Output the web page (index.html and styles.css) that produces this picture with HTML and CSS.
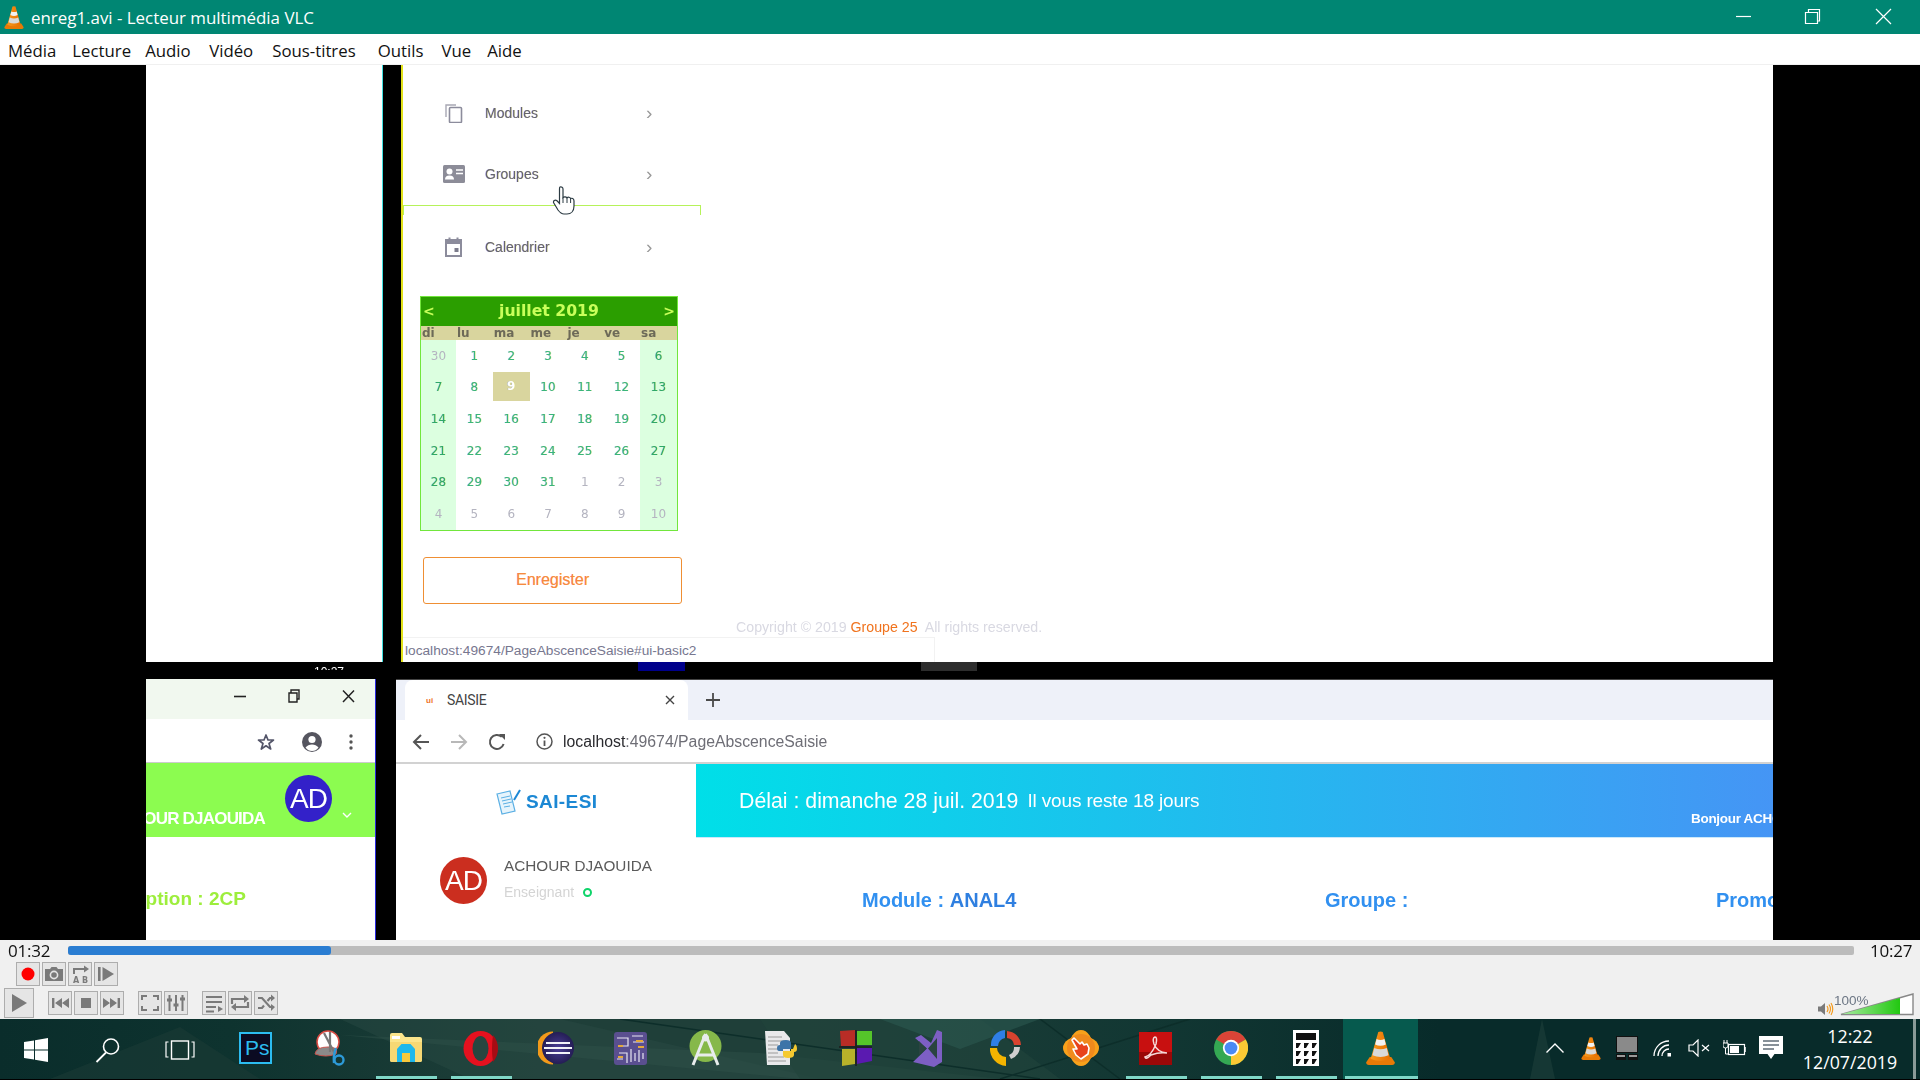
FILE: index.html
```html
<!DOCTYPE html>
<html lang="fr">
<head>
<meta charset="utf-8">
<title>enreg1.avi - Lecteur multimédia VLC</title>
<link rel="stylesheet" href="styles.css">
</head>
<body>
<svg class="defs" width="0" height="0" aria-hidden="true">
  <defs>
    <linearGradient id="coneG" x1="0" x2="1" y1="0" y2="0"><stop offset="0" stop-color="#f79a1e"/><stop offset="1" stop-color="#e86f00"/></linearGradient>
    <linearGradient id="volG" x1="0" x2="1" y1="0" y2="0"><stop offset="0" stop-color="#a8eaa0"/><stop offset="1" stop-color="#22c811"/></linearGradient>
    <radialGradient id="eclG" cx=".5" cy=".5" r=".6"><stop offset="0" stop-color="#4a3d96"/><stop offset="1" stop-color="#1d1748"/></radialGradient>
    <symbol id="vlc" viewBox="0 0 32 38">
      <path d="M4 29 L0 35 Q0 38 3 38 H29 Q32 38 32 35 L28 29 Z" fill="#e87a06"/>
      <path d="M13.5 1 Q16 0 18.5 1 L27 31 Q16 36 5 31 Z" fill="url(#coneG)"/>
      <path d="M11.6 9 Q16 11 20.4 9 L22 15 Q16 18 10 15 Z" fill="#f2f2f2"/>
      <path d="M9 19 Q16 22 23 19 L25 27 Q16 31 7 27 Z" fill="#d9d9d9"/>
    </symbol>
  </defs>
</svg>

<div class="app">
  <header class="titlebar">
    <svg class="title-cone" width="20" height="23"><use href="#vlc"/></svg>
    <span class="title-text">enreg1.avi - Lecteur multimédia VLC</span>
    <div class="winctl">
      <svg width="70" height="34" viewBox="0 0 70 34"><path d="M26 16.500 H41" stroke="#fff" stroke-width="1.200"/></svg>
      <svg width="70" height="34" viewBox="0 0 70 34"><path d="M25.500 12.500 H37.500 V23.500 H25.500 Z M28.500 12 V9.500 H39.500 V21 H38" fill="none" stroke="#fff" stroke-width="1.200"/></svg>
      <svg width="70" height="34" viewBox="0 0 70 34"><path d="M26 9 L41 24 M41 9 L26 24" stroke="#fff" stroke-width="1.200"/></svg>
    </div>
  </header>

  <nav class="menubar">
    <span class="menu-item">Média</span>
    <span class="menu-item m-lecture">Lecture</span>
    <span class="menu-item m-audio">Audio</span>
    <span class="menu-item m-video">Vidéo</span>
    <span class="menu-item m-sous">Sous-titres</span>
    <span class="menu-item m-outils">Outils</span>
    <span class="menu-item">Vue</span>
    <span class="menu-item">Aide</span>
  </nav>

  <main class="video">
    <div class="frame">
      <div class="row-top">
        <div class="blank"></div>
        <div class="divider-top"></div>
        <div class="page">
          <aside class="sidebar">
            <div class="side-item side-first">
              <svg class="ico-mod" width="20" height="20" viewBox="0 0 20 20"><path d="M2 14 V2 H12" fill="none" stroke="#a8a8b4" stroke-width="1.400"/><rect x="5.500" y="4.500" width="12" height="15" rx="1" fill="none" stroke="#8c8c9c" stroke-width="1.600"/></svg>
              <span class="side-label">Modules</span>
              <span class="side-chev">›</span>
            </div>
            <div class="side-item">
              <svg width="22" height="18" viewBox="0 0 22 18"><rect x="0" y="0" width="22" height="18" rx="1.500" fill="#8c8c98"/><circle cx="6.500" cy="6.500" r="3" fill="#fff"/><path d="M2 14.500 Q2 10.500 6.500 10.500 Q11 10.500 11 14.500 Z" fill="#fff"/><path d="M13 5 H20 M13 8.500 H20" stroke="#fff" stroke-width="1.400"/></svg>
              <span class="side-label">Groupes</span>
              <span class="side-chev">›</span>
            </div>
            <div class="side-rule"></div>
            <div class="side-item side-cal">
              <svg class="ico-cal" width="17" height="20" viewBox="0 0 17 20"><path d="M1 3 H16 V19 H1 Z" fill="#fff" stroke="#8c8c9c" stroke-width="2"/><rect x="1" y="3" width="15" height="4" fill="#8c8c9c"/><path d="M4.500 0.500 V4 M12.500 0.500 V4" stroke="#8c8c9c" stroke-width="2"/><rect x="9.500" y="11" width="4" height="4" fill="#7c7c8c"/></svg>
              <span class="side-label">Calendrier</span>
              <span class="side-chev">›</span>
            </div>
            <section class="calendar">
              <div class="cal-head"><span>&lt;</span><strong>juillet 2019</strong><span>&gt;</span></div>
              <div class="cal-week"><span>di</span><span>lu</span><span>ma</span><span>me</span><span>je</span><span>ve</span><span>sa</span></div>
              <div class="cal-grid">
                <span class="we off">30</span><span>1</span><span>2</span><span>3</span><span>4</span><span>5</span><span class="we">6</span>
                <span class="we">7</span><span>8</span><span class="today">9</span><span>10</span><span>11</span><span>12</span><span class="we">13</span>
                <span class="we">14</span><span>15</span><span>16</span><span>17</span><span>18</span><span>19</span><span class="we">20</span>
                <span class="we">21</span><span>22</span><span>23</span><span>24</span><span>25</span><span>26</span><span class="we">27</span>
                <span class="we">28</span><span>29</span><span>30</span><span>31</span><span class="off">1</span><span class="off">2</span><span class="we off">3</span>
                <span class="we off">4</span><span class="off">5</span><span class="off">6</span><span class="off">7</span><span class="off">8</span><span class="off">9</span><span class="we off">10</span>
              </div>
            </section>
            <div class="save-btn">Enregister</div>
          </aside>
          <footer class="copyright">Copyright © 2019 <b>Groupe 25</b>&nbsp; All rights reserved.</footer>
          <div class="status-bubble">localhost:49674/PageAbscenceSaisie#ui-basic2</div>
          <svg class="hand" width="24" height="29" viewBox="0 0 24 29"><path d="M8 1 C9.500 0.300 11 1.500 11 3 V11.500 C12 10.500 14 10.500 15 11.800 C16 10.800 18 11 18.600 12.600 C19.800 11.800 22 12.400 22 15 V20 C22 25 19 28 15 28 H12 C9 28 7.500 26 6 24 L1.800 17 C0.800 15 3 13.200 5 14.800 L7.500 17.500 V3 C7.500 2 7.500 1.300 8 1 Z" fill="#fff" stroke="#2b3a42" stroke-width="1.200"/><path d="M11 11.500 V17 M15 12 V17 M18.600 12.800 V17" stroke="#2b3a42" stroke-width="1"/></svg>
        </div>
      </div>

      <div class="gap">
        <span class="gap-clock">10:27</span>
        <span class="gap-blue"></span>
        <span class="gap-gray"></span>
      </div>

      <div class="row-bottom">
        <div class="win-left">
          <div class="wl-title">
            <svg width="55" height="40" viewBox="0 0 55 40"><path d="M24 17.500 H36" stroke="#222" stroke-width="1.600"/></svg>
            <svg width="55" height="40" viewBox="0 0 55 40"><path d="M24 14 H32 V23 H24 Z M26 14 V11 H34 V20 H32" fill="none" stroke="#222" stroke-width="1.400"/></svg>
            <svg width="55" height="40" viewBox="0 0 55 40"><path d="M23 11.500 L34 23 M34 11.500 L23 23" stroke="#222" stroke-width="1.500"/></svg>
          </div>
          <div class="wl-tools">
            <svg width="18" height="18" viewBox="0 0 18 18"><path d="M9 2 L11 7 H16.500 L12 10.500 L13.700 16 L9 12.800 L4.300 16 L6 10.500 L1.500 7 H7 Z" fill="#fff" stroke="#54566a" stroke-width="1.700" stroke-linejoin="round"/></svg>
            <svg width="22" height="22" viewBox="0 0 22 22"><circle cx="11" cy="11" r="10" fill="#55555f"/><circle cx="11" cy="8.500" r="3.600" fill="#fff"/><path d="M4.500 16.500 Q7 13.400 11 13.400 Q15 13.400 17.500 16.500 Q15 20 11 20 Q7 20 4.500 16.500 Z" fill="#fff"/></svg>
            <svg width="4" height="18" viewBox="0 0 4 18"><circle cx="2" cy="3" r="1.700" fill="#555"/><circle cx="2" cy="9" r="1.700" fill="#555"/><circle cx="2" cy="15" r="1.700" fill="#555"/></svg>
          </div>
          <div class="wl-band">
            <span class="wl-name">ACHOUR DJAOUIDA</span>
            <span class="avatar avatar-blue">AD</span>
            <svg class="wl-chev" width="10" height="6" viewBox="0 0 10 6"><path d="M1 1 L5 5 L9 1" fill="none" stroke="#fff" stroke-width="1.400"/></svg>
          </div>
          <div class="wl-option">option : 2CP</div>
        </div>
        <div class="divider-bottom"></div>
        <div class="win-right">
          <div class="tabstrip">
            <div class="tab">
              <span class="favicon">ui</span>
              <span class="tab-title">SAISIE</span>
              <svg class="tab-close" width="10" height="10" viewBox="0 0 10 10"><path d="M1 1 L9 9 M9 1 L1 9" stroke="#444" stroke-width="1.400"/></svg>
            </div>
            <svg class="tab-new" width="14" height="14" viewBox="0 0 14 14"><path d="M7 0 V14 M0 7 H14" stroke="#4a4a4a" stroke-width="1.800"/></svg>
          </div>
          <div class="urlbar">
            <svg width="18" height="16" viewBox="0 0 18 16"><path d="M9 1 L2 8 L9 15 M2 8 H17" fill="none" stroke="#555" stroke-width="2"/></svg>
            <svg width="18" height="16" viewBox="0 0 18 16"><path d="M9 1 L16 8 L9 15 M16 8 H1" fill="none" stroke="#b8b8b8" stroke-width="2"/></svg>
            <svg width="18" height="18" viewBox="0 0 18 18"><path d="M15.600 11 A7 7 0 1 1 13.800 3.900" fill="none" stroke="#555" stroke-width="2"/><path d="M11 1 H17 V7 Z" fill="#555"/></svg>
            <svg class="url-info" width="17" height="17" viewBox="0 0 17 17"><circle cx="8.500" cy="8.500" r="7.500" fill="none" stroke="#555" stroke-width="1.500"/><path d="M8.500 7.500 V13" stroke="#555" stroke-width="1.800"/><circle cx="8.500" cy="4.800" r="1.100" fill="#555"/></svg>
            <span class="url-text"><b>localhost</b>:49674/PageAbscenceSaisie</span>
          </div>
          <div class="app-head">
            <div class="brand">
              <svg width="26" height="26" viewBox="0 0 26 26"><path d="M2 5 L15 2 L20 22 L7 25 Z" fill="#e6f4fc" stroke="#5cb0e4" stroke-width="1.200"/><path d="M6 9 L15 7 M7 12 L16 10 M8 15 L17 13 M9 18 L15 17" stroke="#5cb0e4" stroke-width="1"/><path d="M19 11 L25 1" stroke="#1d88d6" stroke-width="2"/></svg>
              <span class="brand-name">SAI-ESI</span>
            </div>
            <div class="banner">
              <span class="banner-main">Délai : dimanche 28 juil. 2019</span>
              <span class="banner-sub">Il vous reste 18 jours</span>
              <span class="banner-hello">Bonjour ACHOUR DJAOUIDA</span>
            </div>
          </div>
          <div class="content">
            <div class="user">
              <span class="avatar avatar-red">AD</span>
              <div class="user-info">
                <div class="user-name">ACHOUR DJAOUIDA</div>
                <div class="user-role">Enseignant <i class="online"></i></div>
              </div>
            </div>
            <div class="meta meta-module">Module : <b>ANAL4</b></div>
            <div class="meta meta-group">Groupe :</div>
            <div class="meta">Promotion : 2CP</div>
          </div>
        </div>
      </div>
    </div>
  </main>

  <section class="controls">
    <div class="seek">
      <span class="time">01:32</span>
      <div class="track"><div class="track-done"></div></div>
      <span class="time time-end">10:27</span>
    </div>
    <div class="btn-row btn-row-a">
      <span class="cbtn"><svg width="22" height="22" viewBox="0 0 22 22"><circle cx="11" cy="11" r="6.500" fill="#f00"/></svg></span>
      <span class="cbtn"><svg width="22" height="22" viewBox="0 0 22 22"><path d="M2 6 H7 L8.500 4 H13.500 L15 6 H20 V18 H2 Z" fill="#7a7a7a"/><circle cx="11" cy="12" r="3.600" fill="none" stroke="#e5e5e5" stroke-width="1.600"/></svg></span>
      <span class="cbtn"><svg width="22" height="22" viewBox="0 0 22 22"><path d="M5 11 V6 H17" fill="none" stroke="#7a7a7a" stroke-width="2"/><path d="M15 2.500 L20 6 L15 9.500 Z" fill="#7a7a7a"/><text x="4" y="20" class="ab">A</text><text x="13" y="20" class="ab">B</text></svg></span>
      <span class="cbtn"><svg width="22" height="22" viewBox="0 0 22 22"><rect x="3" y="4" width="2.600" height="14" fill="#7a7a7a"/><path d="M7.500 4 L19 11 L7.500 18 Z" fill="#7a7a7a"/></svg></span>
    </div>
    <div class="btn-row btn-row-b">
      <span class="cbtn cbtn-play"><svg width="28" height="28" viewBox="0 0 28 28"><path d="M7 5 L22 14 L7 23 Z" fill="#7a7a7a"/></svg></span>
      <span class="cgroup cgroup-first">
        <span class="cbtn"><svg width="22" height="22" viewBox="0 0 22 22"><rect x="3" y="6" width="2.400" height="10" fill="#7a7a7a"/><path d="M13 6 L6 11 L13 16 Z M20 6 L13 11 L20 16 Z" fill="#7a7a7a"/></svg></span>
        <span class="cbtn"><svg width="22" height="22" viewBox="0 0 22 22"><rect x="6" y="6" width="10" height="10" fill="#7a7a7a"/></svg></span>
        <span class="cbtn"><svg width="22" height="22" viewBox="0 0 22 22"><rect x="16.600" y="6" width="2.400" height="10" fill="#7a7a7a"/><path d="M2 6 L9 11 L2 16 Z M9 6 L16 11 L9 16 Z" fill="#7a7a7a"/></svg></span>
      </span>
      <span class="cgroup">
        <span class="cbtn"><svg width="22" height="22" viewBox="0 0 22 22"><path d="M3 8 V4 H8 M14 4 H19 V8 M19 14 V18 H14 M8 18 H3 V14" fill="none" stroke="#7a7a7a" stroke-width="2"/></svg></span>
        <span class="cbtn"><svg width="22" height="22" viewBox="0 0 22 22"><path d="M4.500 3 V19 M11 3 V19 M17.500 3 V19" stroke="#7a7a7a" stroke-width="2"/><path d="M2 8 H7 M8.500 13 H13.500 M15 7 H20" stroke="#7a7a7a" stroke-width="3"/></svg></span>
      </span>
      <span class="cgroup">
        <span class="cbtn"><svg width="22" height="22" viewBox="0 0 22 22"><path d="M3 5 H19 M3 10 H19 M3 15 H13 M3 19.500 H11" stroke="#7a7a7a" stroke-width="2"/><path d="M15 14 L20 17 L15 20 Z" fill="#7a7a7a"/></svg></span>
        <span class="cbtn"><svg width="22" height="22" viewBox="0 0 22 22"><path d="M3 12 V7 H16 M19 10 V15 H6" fill="none" stroke="#7a7a7a" stroke-width="2.200"/><path d="M15 3 L20 7 L15 11 Z M7 11 L2 15 L7 19 Z" fill="#7a7a7a"/></svg></span>
        <span class="cbtn"><svg width="22" height="22" viewBox="0 0 22 22"><path d="M3 6 H7 L15 15 H17 M3 16 H7 L9 13.500 M12.500 9 L15 6 H17" fill="none" stroke="#7a7a7a" stroke-width="2.200"/><path d="M16 2.500 L20 6 L16 9.500 Z M16 12 L20 15 L16 19 Z" fill="#7a7a7a"/></svg></span>
      </span>
      <div class="volume">
        <svg width="16" height="14" viewBox="0 0 16 14"><path d="M0 4.500 H3 L7 1 V13 L3 9.500 H0 Z" fill="#7a7a7a"/><path d="M9 4 Q11 7 9 10 M11 2.500 Q14 7 11 11.500 M13 1 Q16.500 7 13 13" fill="none" stroke="#f39a1e" stroke-width="1.200"/></svg>
        <svg class="vol-bar" width="74" height="23" viewBox="0 0 74 23"><path d="M1 21.500 L73 1 V21.500 Z" fill="#fff" stroke="#888" stroke-width="1.400"/><path d="M2 21 L60 5 V21 Z" fill="url(#volG)"/></svg>
        <span class="vol-label">100%</span>
      </div>
    </div>
  </section>

  <footer class="taskbar">
    <svg class="task-bg" width="1920" height="60" viewBox="0 0 1920 60" preserveAspectRatio="none">
      <path d="M340 0 L560 0 L820 60 L470 60 Z" fill="#2a4c44" opacity=".45"/>
      <path d="M340 16 L760 34 L1000 60 L800 60 Z" fill="#2d5048" opacity=".5"/>
      <path d="M760 0 L980 0 L1060 60 L800 60 Z" fill="#21443c" opacity=".6"/>
      <path d="M880 0 L1040 0 L960 30 Z" fill="#2c5850" opacity=".6"/>
      <path d="M1555 60 L1530 60 L1542 0 Z" fill="#21443e" opacity=".5"/>
      <path d="M50 60 L180 8 L260 60 Z" fill="#1a3a35" opacity=".6"/>
      <path d="M1040 0 L1120 60 M1000 60 L1190 0 M620 0 L1040 60" stroke="#0d2e2a" stroke-width="1.500"/>
    </svg>
    <div class="task-icons">
      <span class="start"><svg width="24" height="24" viewBox="0 0 24 24"><path d="M0 4 L10 2.500 V11.500 H0 Z M11 2.300 L24 0 V11.500 H11 Z M0 12.500 H10 V21.500 L0 20 Z M11 12.500 H24 V24 L11 21.700 Z" fill="#fff"/></svg></span>
      <span class="start"><svg width="26" height="26" viewBox="0 0 26 26"><circle cx="16" cy="9.500" r="7.500" fill="none" stroke="#fff" stroke-width="1.600"/><path d="M11 15.500 L1.500 25" stroke="#fff" stroke-width="1.800"/></svg></span>
      <span class="start"><svg width="30" height="20" viewBox="0 0 30 20"><rect x="6.500" y="1" width="17" height="18" fill="none" stroke="#fff" stroke-width="1.400"/><path d="M3.500 2 H1 V17 H3.500 M26.500 2 H29 V17 H26.500" fill="none" stroke="#fff" stroke-width="1.200"/></svg></span>
      <div class="cells">
        <span class="cell"><svg width="33" height="32" viewBox="0 0 33 32"><rect x="1" y="1" width="31" height="30" fill="#0b0b22" stroke="#2cbcf0" stroke-width="2"/><text x="6" y="23" class="ps">Ps</text></svg></span>
        <span class="cell"><svg width="34" height="36" viewBox="0 0 34 36"><ellipse cx="14" cy="12" rx="11" ry="11" fill="#fff" stroke="#d84a42" stroke-width="1.500"/><path d="M1 24 Q2 17 14 17 Q25 17 22 24 Q12 28 1 24 Z" fill="#8a8a8a" stroke="#c9544e" stroke-width="1"/><path d="M10 3 L21 24 M16 2 L16 22" stroke="#777" stroke-width="2.200"/><circle cx="25" cy="30" r="4.500" fill="none" stroke="#2d9ad8" stroke-width="2.400"/><path d="M22 18 Q19 26 20 33" fill="none" stroke="#2d9ad8" stroke-width="2.400"/></svg></span>
        <span class="cell running"><svg width="32" height="30" viewBox="0 0 32 30"><path d="M0 2 Q0 0 2 0 H12 L15 4 H30 Q32 4 32 6 V27 Q32 29 30 29 H2 Q0 29 0 27 Z" fill="#fbe58c"/><path d="M0 9 H32 V27 Q32 29 30 29 H2 Q0 29 0 27 Z" fill="#f6d874"/><path d="M2 3 H10 V6 H2 Z" fill="#fff"/><path d="M7 16 L11.500 11 H20.500 L25 16 V29 H20 V20 H12 V29 H7 Z" fill="#1eb8ec"/><rect x="12" y="20" width="8" height="9" fill="#f8c93c"/></svg></span>
        <span class="cell running"><svg width="35" height="35" viewBox="0 0 35 35"><ellipse cx="17.500" cy="17.500" rx="17" ry="17.500" fill="#e5111f"/><ellipse cx="17.500" cy="17.500" rx="8" ry="12.500" fill="#274640"/><path d="M30 4 Q35 10 35 17.500 Q35 25 30 31 Q28 18 30 4 Z" fill="#a60c14"/></svg></span>
        <span class="cell"><svg width="36" height="34" viewBox="0 0 36 34"><path d="M15 0.500 A16.500 16.500 0 0 0 15 33.500 Z" fill="#f29a1a"/><circle cx="20" cy="17" r="16" fill="url(#eclG)"/><path d="M8 12 H32 M6 17 H34 M8 22 H32" stroke="#f2f2f8" stroke-width="2"/></svg></span>
        <span class="cell"><svg width="33" height="33" viewBox="0 0 33 33"><rect x="0" y="0" width="33" height="33" rx="3" fill="#5a4f90"/><path d="M3 6 H14 V14 H4 M18 4 H29 M19 10 H30 M5 21 H13 V31 M3 27 H9 M17 17 V30 M21 21 V29 M25 18 V30 M29 21 V27" fill="none" stroke="#e8e6f2" stroke-width="1.200"/><path d="M22 9 H29 M4 14 H9 M24 15 H30 M4 25 H9" stroke="#e3a93c" stroke-width="1.800"/></svg></span>
        <span class="cell"><svg width="33" height="36" viewBox="0 0 33 36"><circle cx="16.500" cy="16" r="16" fill="#86b84a"/><path d="M16.500 4 L4 35 M16.500 4 L29 35 M8 25 H25" stroke="#e8ecec" stroke-width="3" fill="none"/><circle cx="16.500" cy="8" r="3.500" fill="#e8ecec"/></svg></span>
        <span class="cell"><svg width="34" height="35" viewBox="0 0 34 35"><path d="M1 0 H20 L26 7 V34 H3 Z" fill="#e8e8ea"/><path d="M4 6 H18 M4 10 H22 M4 14 H14 M4 18 H14 M4 22 H14 M4 26 H20 M4 30 H22" stroke="#9a9a9a" stroke-width="1"/><path d="M16 12 Q16 9 22 9 Q27 9 27 12 V18 H19 V20 H15 Q13 20 13 17 Q13 14 16 14 Z" fill="#3d74a8"/><path d="M31 13 Q33 14 33 18 Q33 21 30 21 V24 Q30 27 24 27 Q19 27 19 24 V20 H27 V18 H29 Z" fill="#f5c930"/></svg></span>
        <span class="cell"><svg width="33" height="36" viewBox="0 0 33 36"><path d="M1 1 L16 0 V16 H2 Z" fill="#b82d26"/><path d="M18 1 L33 1 V15 H18 Z" fill="#55c52a"/><path d="M3 19 H16 V34 L3 36 Z" fill="#b7b22a"/><path d="M18 18 H33 V31 L18 34 Z" fill="#5a1ab0"/><path d="M0 17 H33 M17 0 V36" stroke="#1d1d1d" stroke-width="1.500"/></svg></span>
        <span class="cell"><svg width="36" height="37" viewBox="0 0 36 37"><path d="M24 0 L29 2 V32 L21 37 L0 32 L14 18.500 L2 8 L8 5 L18 13 Z" fill="#7d5fc4"/><path d="M6 11 L13 18.500 L6 25 Z M24 8 V29 L15 18.500 Z" fill="#2a4440"/></svg></span>
        <span class="cell"><svg width="32" height="36" viewBox="0 0 32 36"><path d="M1 16 A15 15 0 0 1 15 0 V8 A9 9 0 0 0 8 16 Z" fill="#2f7fe6"/><path d="M17 8 V1 A15 15 0 0 1 31 15 H24 A8 8 0 0 0 17 8 Z" fill="#d8432f"/><path d="M0 18 H7 A9 9 0 0 0 16 27 V36 A17 17 0 0 1 0 18 Z" fill="#f4b400"/><path d="M24 17 H30 A14 14 0 0 1 21 29 L19 25 A8 8 0 0 0 24 17 Z" fill="#cfcfcf"/></svg></span>
        <span class="cell"><svg width="36" height="36" viewBox="0 0 36 36"><ellipse cx="18" cy="18" rx="12" ry="18" fill="#f8a11b"/><ellipse cx="18" cy="18" rx="18" ry="12" fill="#f8a11b"/><circle cx="18" cy="18" r="14" fill="#f08a1c"/><path d="M11 8 L17 14 L19 12 L21 15 L24 14 L26 18 L25 24 L18 29 L13 25 L10 19 L14 19 L9 10 Z" fill="#e8431c" stroke="#fff" stroke-width="1.600" stroke-linejoin="round"/></svg></span>
        <span class="cell running"><svg width="33" height="33" viewBox="0 0 33 33"><rect x="0" y="0" width="33" height="33" fill="#c81010"/><path d="M0 20 H33 V33 H0 Z" fill="#9a0808"/><path d="M6 25 Q12 24 17 12 Q18.500 5 16 5 Q13 6 15 12 Q18 20 28 21 Q20 20 12 23 Q7 28 6 25 Z" fill="none" stroke="#f5d8d8" stroke-width="1.500"/></svg></span>
        <span class="cell running"><svg width="34" height="34" viewBox="0 0 48 48"><circle cx="24" cy="24" r="24" fill="#34a853"/><path d="M24 24 L3.200 12 A24 24 0 0 1 44.800 12 Z" fill="#db4437"/><path d="M24 24 L44.800 12 A24 24 0 0 1 24 48 Z" fill="#fcc934"/><circle cx="24" cy="24" r="11.500" fill="#fff"/><circle cx="24" cy="24" r="9" fill="#4a8af4"/></svg></span>
        <span class="cell running"><svg width="26" height="36" viewBox="0 0 26 36"><rect width="26" height="36" fill="#fff"/><rect x="3" y="3" width="20" height="7" fill="#111"/><path d="M3 13 H8 L5 18 H3 Z M11 13 H16 L13 18 H11 Z M19 13 H24 L21 18 H19 Z M3 21 H8 L5 26 H3 Z M11 21 H16 L13 26 H11 Z M19 21 H24 L21 26 H19 Z M3 29 H8 L5 34 H3 Z M11 29 H16 L13 34 H11 Z M19 29 H24 L21 34 H19 Z" fill="#111"/></svg></span>
        <span class="cell active"><svg width="31" height="34"><use href="#vlc"/></svg></span>
      </div>
    </div>
    <div class="tray">
      <span class="tray-item"><svg width="18" height="10" viewBox="0 0 18 10"><path d="M0.500 9.500 L9 1 L17.500 9.500" fill="none" stroke="#fff" stroke-width="1.400"/></svg></span>
      <span class="tray-item"><svg width="20" height="23"><use href="#vlc"/></svg></span>
      <span class="tray-item"><svg width="22" height="24" viewBox="0 0 22 24"><rect x="0.500" y="0.500" width="21" height="16" fill="#8a8a8a" stroke="#111"/><rect x="0" y="18" width="10" height="6" fill="#111"/><rect x="12" y="18" width="10" height="6" fill="#111"/><rect x="1" y="19" width="8" height="2" fill="#999"/><rect x="13" y="19" width="8" height="2" fill="#999"/></svg></span>
      <span class="tray-item"><svg width="20" height="18" viewBox="0 0 20 18"><path d="M1 17 A15 15 0 0 1 16 2 M5 17 A11 11 0 0 1 16 6 M9 17 A7 7 0 0 1 16 10" fill="none" stroke="#fff" stroke-width="1.300"/><rect x="14.500" y="14" width="3.500" height="3.500" fill="#fff"/></svg></span>
      <span class="tray-item"><svg width="22" height="18" viewBox="0 0 22 18"><path d="M1 6 H5 L10 1 V17 L5 12 H1 Z" fill="none" stroke="#fff" stroke-width="1.200"/><path d="M14 6 L21 12 M21 6 L14 12" stroke="#fff" stroke-width="1.200"/></svg></span>
      <span class="tray-item"><svg width="24" height="18" viewBox="0 0 24 18"><rect x="5.500" y="5.500" width="16" height="10" fill="none" stroke="#fff" stroke-width="1.200"/><rect x="7" y="7" width="9" height="7" fill="#fff"/><path d="M22 8 V13" stroke="#fff" stroke-width="1.500"/><path d="M1 1 V4 M4 1 V4 M0 4 H5 V7 Q5 9 2.500 9 Q0 9 0 7 Z M2.500 9 V15 H6" fill="none" stroke="#fff"/></svg></span>
      <span class="tray-item"><svg width="24" height="24" viewBox="0 0 24 24"><path d="M0 0 H24 V18 H15.500 L12 23 L8.500 18 H0 Z" fill="#fff"/><path d="M4 5 H20 M4 9 H20 M4 13 H15" stroke="#123" stroke-width="1.200"/></svg></span>
    </div>
    <div class="clock"><span>12:22</span><span>12/07/2019</span></div>
    <div class="show-desktop"></div>
  </footer>
</div>
</body>
</html>
```

FILE: styles.css
```css
* { box-sizing: border-box; }
html, body { margin: 0; padding: 0; }
body { font-family: "Liberation Sans", Arial, sans-serif; overflow: hidden; background: #000; }
.defs { display: block; height: 0; width: 0; overflow: hidden; }
svg { display: block; flex-shrink: 0; }
.app { width: 1920px; height: 1080px; display: flex; flex-direction: column; overflow: hidden; }

/* title + menu */
.titlebar { height: 34px; background: #008673; display: flex; align-items: center; padding-left: 4px; color: #fff; }
.title-text { font: 16.900px "Open Sans", sans-serif; margin-left: 7px; white-space: nowrap; }
.winctl { margin-left: auto; display: flex; }
.menubar { height: 31px; background: #fff; border-bottom: 1px solid #f0f0f0; display: flex; align-items: center; padding: 2px 0 0 8px; font: 16.800px "Open Sans", sans-serif; color: #111; }
.menu-item { margin-right: 16px; }
.m-lecture { margin-right: 14px; }
.m-audio { margin-right: 18.500px; }
.m-video { margin-right: 19px; }
.m-sous { margin-right: 22px; }
.m-outils { margin-right: 18px; }

/* video */
.video { height: 876px; background: #000; padding-left: 146px; padding-right: 147px; }
.frame { width: 1627px; height: 876px; display: flex; flex-direction: column; filter: blur(.35px); }
.row-top { height: 597px; display: flex; }
.blank { width: 236px; background: #fff; }
.divider-top { width: 21px; background: #000; border-left: 1px solid #3fe0e0; border-right: 2px solid #e2e21a; flex-shrink: 0; }
.page { flex: 1; background: #fff; position: relative; display: flex; overflow: hidden; }
.sidebar { width: 298px; display: flex; flex-direction: column; padding-top: 28px; flex-shrink: 0; }
.side-item { height: 40px; display: flex; align-items: center; padding-left: 40px; }
.side-item svg { margin-right: auto; }
.side-item .ico-mod { margin-left: 1px; }
.side-item .ico-cal { margin-left: 2px; }
.side-item + .side-item { margin-top: 21px; }
.side-label { font-size: 14px; color: #64646e; width: 161px; flex-shrink: 0; text-shadow: .5px 0 rgba(230,230,60,.35), -.5px 0 rgba(110,80,255,.35); }
.side-chev { width: 55px; flex-shrink: 0; color: #999; font-size: 19px; line-height: 20px; }
.side-rule { height: 10px; margin-top: 11px; border: 1px solid #b6f25a; border-bottom: 0; }
.side-item.side-cal { margin-top: 12px; }

.calendar { width: 258px; margin: 29px 0 0 17px; border: 1px solid #72e63c; font-family: "DejaVu Sans", sans-serif; }
.cal-head { height: 29px; background: #2b9e00; color: #c9ff5a; display: flex; align-items: center; justify-content: space-between; padding: 0 2px 2px 2px; font-size: 14px; font-weight: bold; }
.cal-head strong { font-size: 15.700px; }
.cal-week { height: 14px; background: #d9d59e; display: grid; grid-template-columns: 35px repeat(5, 36.800px) 37px; font-size: 12px; font-weight: bold; color: #6d6a58; line-height: 15px; }
.cal-week span { padding-left: 1px; }
.cal-grid { display: grid; grid-template-columns: 35px repeat(5, 36.800px) 37px; grid-auto-rows: 31.650px; font-size: 12px; color: #3ab57a; text-shadow: .5px 0 rgba(230,230,60,.4), -.5px 0 rgba(70,110,255,.35); }
.cal-grid span { display: flex; align-items: center; justify-content: center; }
.cal-grid .we { background: #dcffe0; color: #2fa868; }
.cal-grid .off { color: #b4b4c0; text-shadow: none; }
.cal-grid .today { background: #d9d59e; color: #fff; font-weight: bold; margin: 0 0 2px 0; }

.save-btn { width: 259px; height: 47px; margin: 26px 0 0 20px; border: 1.500px solid #ef8f34; border-radius: 3px; display: flex; align-items: center; justify-content: center; color: #f58a40; font-size: 16px; text-shadow: .5px 0 rgba(255,220,40,.5), -.5px 0 rgba(255,60,220,.4); }
.copyright { align-self: flex-end; margin: 0 0 27px 35px; font-size: 14.200px; color: #d9d9e2; white-space: nowrap; }
.copyright b { font-weight: normal; color: #f0731e; }
.status-bubble { position: absolute; left: 0; bottom: 0; width: 532px; height: 25px; padding-left: 2px; background: #fff; border-top: 1px solid #f2f2f2; border-right: 1px solid #f2f2f2; font-size: 13.700px; line-height: 25px; color: #77778f; white-space: nowrap; }
.hand { position: absolute; left: 149px; top: 121px; }

.gap { height: 17px; display: flex; padding-left: 168px; }
.gap-clock { width: 32px; height: 3px; margin-top: 5px; overflow: hidden; color: #fff; font-size: 12px; line-height: 10px; }
.gap-blue { width: 47px; height: 9px; margin-left: 292px; background: #00008b; }
.gap-gray { width: 56px; height: 9px; margin-left: 236px; background: #2d2d2d; }

.row-bottom { height: 262px; display: flex; }
.win-left { width: 230px; background: #fff; border-right: 1px solid #2a2ae0; overflow: hidden; }
.wl-title { height: 40px; background: #f1f8ef; display: flex; justify-content: flex-end; }
.wl-tools { height: 44px; border-bottom: 1px solid #ccc; background: #fff; display: flex; align-items: center; justify-content: flex-end; padding: 2px 22px 0 0; gap: 26px; }
.wl-band { height: 74px; background: #8cfc50; display: flex; justify-content: flex-end; padding-right: 23px; overflow: hidden; }
.wl-name { color: #fff; font-weight: bold; font-size: 17px; white-space: nowrap; flex-shrink: 0; align-self: flex-end; margin: 0 20px 8px 0; letter-spacing: -.8px; }
.avatar { width: 47px; height: 47px; border-radius: 50%; display: flex; align-items: center; justify-content: center; color: #fff; flex-shrink: 0; font-size: 28px; letter-spacing: -1px; }
.avatar-blue { background: #3321c9; margin-top: 12px; }
.wl-chev { align-self: flex-end; margin: 0 0 19px 10px; }
.wl-option { margin: 51px 0 0 -12px; color: #9dee3c; font-size: 19px; font-weight: bold; white-space: nowrap; }
.divider-bottom { width: 20px; background: #000; flex-shrink: 0; }

.win-right { flex: 1; min-width: 0; background: #fff; overflow: hidden; }
.tabstrip { height: 41px; background: #eef1f9; display: flex; align-items: center; padding-left: 9px; border-top: 1px solid #444; }
.tab { width: 283px; height: 40px; background: #fff; border-radius: 8px 8px 0 0; display: flex; align-items: center; padding-left: 21px; }
.favicon { width: 21px; font-size: 8px; color: #f0742a; font-weight: bold; }
.tab-title { font: 14px Roboto, sans-serif; color: #444; width: 218px; letter-spacing: -.3px; }
.tab-new { margin-left: 18px; }
.urlbar { height: 44px; background: #fff; border-bottom: 2px solid #d2d2d2; display: flex; align-items: center; padding: 1px 0 0 16px; gap: 20px; }
.url-info { margin-left: 10px; }
.url-text { margin-left: -10px; font-size: 15.800px; color: #6e6e76; white-space: nowrap; }
.url-text b { font-weight: normal; color: #2a2a2e; }
.app-head { height: 74px; display: flex; }
.brand { width: 300px; flex-shrink: 0; display: flex; align-items: center; padding: 2px 0 0 99px; gap: 5px; }
.brand-name { font-size: 19px; font-weight: bold; color: #1c88d4; letter-spacing: .4px; }
.banner { width: 1077px; flex-shrink: 0; display: flex; align-items: center; padding: 1px 0 0 43px; background: linear-gradient(90deg, #00dfe8, #4595f5); border-bottom: 1px solid #cbe8fa; color: #fff; position: relative; white-space: nowrap; overflow: hidden; }
.banner-main { font-size: 21.300px; margin-right: 9px; }
.banner-sub { font-size: 19px; letter-spacing: -.15px; }
.banner-hello { position: absolute; left: 995px; top: 47px; font-size: 13.500px; font-weight: bold; letter-spacing: -.3px; }
.content { display: flex; height: 103px; padding-left: 44px; }
.user { width: 422px; flex-shrink: 0; display: flex; padding-top: 19px; }
.avatar-red { background: #cb2e1f; }
.user-info { margin-left: 17px; }
.user-name { font-size: 15.300px; color: #5b5b5b; }
.user-role { font-size: 14px; color: #d4d4d4; margin-top: 9px; display: flex; align-items: center; gap: 9px; }
.online { width: 9px; height: 9px; border: 2px solid #0fd46a; border-radius: 50%; }
.meta { padding-top: 51px; font-size: 20px; font-weight: bold; color: #3190f0; white-space: nowrap; flex-shrink: 0; }
.meta-module { width: 463px; }
.meta-module b { color: #2f7fe0; }
.meta-group { width: 391px; }

/* controls */
.controls { height: 79px; background: #f0f0f0; position: relative; z-index: 1; margin-top: -1px; flex-shrink: 0; }
.seek { height: 21px; display: flex; align-items: center; padding-left: 8px; }
.time { font: 17px "Open Sans", sans-serif; color: #111; width: 60px; letter-spacing: -.2px; }
.time-end { width: auto; margin-left: 16px; }
.track { width: 1786px; height: 9px; background: #bcbcbc; border-radius: 2px; }
.track-done { width: 263px; height: 9px; background: #2a7dd2; border-radius: 3px; }
.btn-row { display: flex; align-items: center; }
.btn-row-a { height: 25px; padding-left: 16px; gap: 2px; }
.btn-row-b { height: 31px; margin-top: 1px; padding-left: 4px; position: relative; }
.cbtn { width: 24px; height: 24px; background: #e5e5e5; border: 1px solid #adadad; display: flex; align-items: center; justify-content: center; flex-shrink: 0; }
.cbtn-play { width: 30px; height: 30px; }
.cgroup { display: flex; gap: 2px; margin-left: 14px; }
.ab { font: bold 8px "DejaVu Sans", sans-serif; fill: #7a7a7a; }
.ps { font: 21px "Liberation Sans", sans-serif; fill: #2cbcf0; }
.volume { position: relative; margin-left: auto; margin-right: 6px; display: flex; align-items: flex-end; height: 23px; gap: 6px; align-self: flex-end; margin-bottom: 2px; }
.vol-label { position: absolute; left: 16px; top: 0; font-size: 13.500px; color: #6c7684; }

/* taskbar */
.taskbar { height: 60px; flex-shrink: 0; position: relative; overflow: hidden; display: flex; background: linear-gradient(90deg, #0a2d2b 0, #0e332f 12%, #1f3f39 28%, #1f3f39 42%, #123733 60%, #082b2a 75%, #082b2a 100%); }
.task-bg { position: absolute; left: 0; top: 0; }
.task-icons { position: relative; display: flex; width: 1537px; }
.start { width: 72px; height: 60px; display: flex; align-items: center; justify-content: center; flex-shrink: 0; padding-top: 2px; }
.cells { display: flex; margin-left: 2px; }
.cell { width: 75px; height: 60px; position: relative; display: flex; align-items: center; justify-content: center; flex-shrink: 0; padding-bottom: 2px; }
.running::after, .active::after { content: ""; position: absolute; left: 8px; right: 6px; bottom: 0; height: 3px; background: #80d8c8; }
.active { background: #065a4e; }
.active::after { left: 2px; right: 0; }
.tray { position: relative; display: flex; }
.tray-item { width: 36px; height: 60px; display: flex; align-items: center; justify-content: center; padding-bottom: 2px; }
.clock { position: relative; width: 122px; height: 60px; display: flex; flex-direction: column; align-items: center; justify-content: center; gap: 4px; color: #fff; font: 17.800px/22px "Open Sans", sans-serif; }
.show-desktop { position: relative; width: 3px; margin-left: 2px; background: #8a9a98; }
```
